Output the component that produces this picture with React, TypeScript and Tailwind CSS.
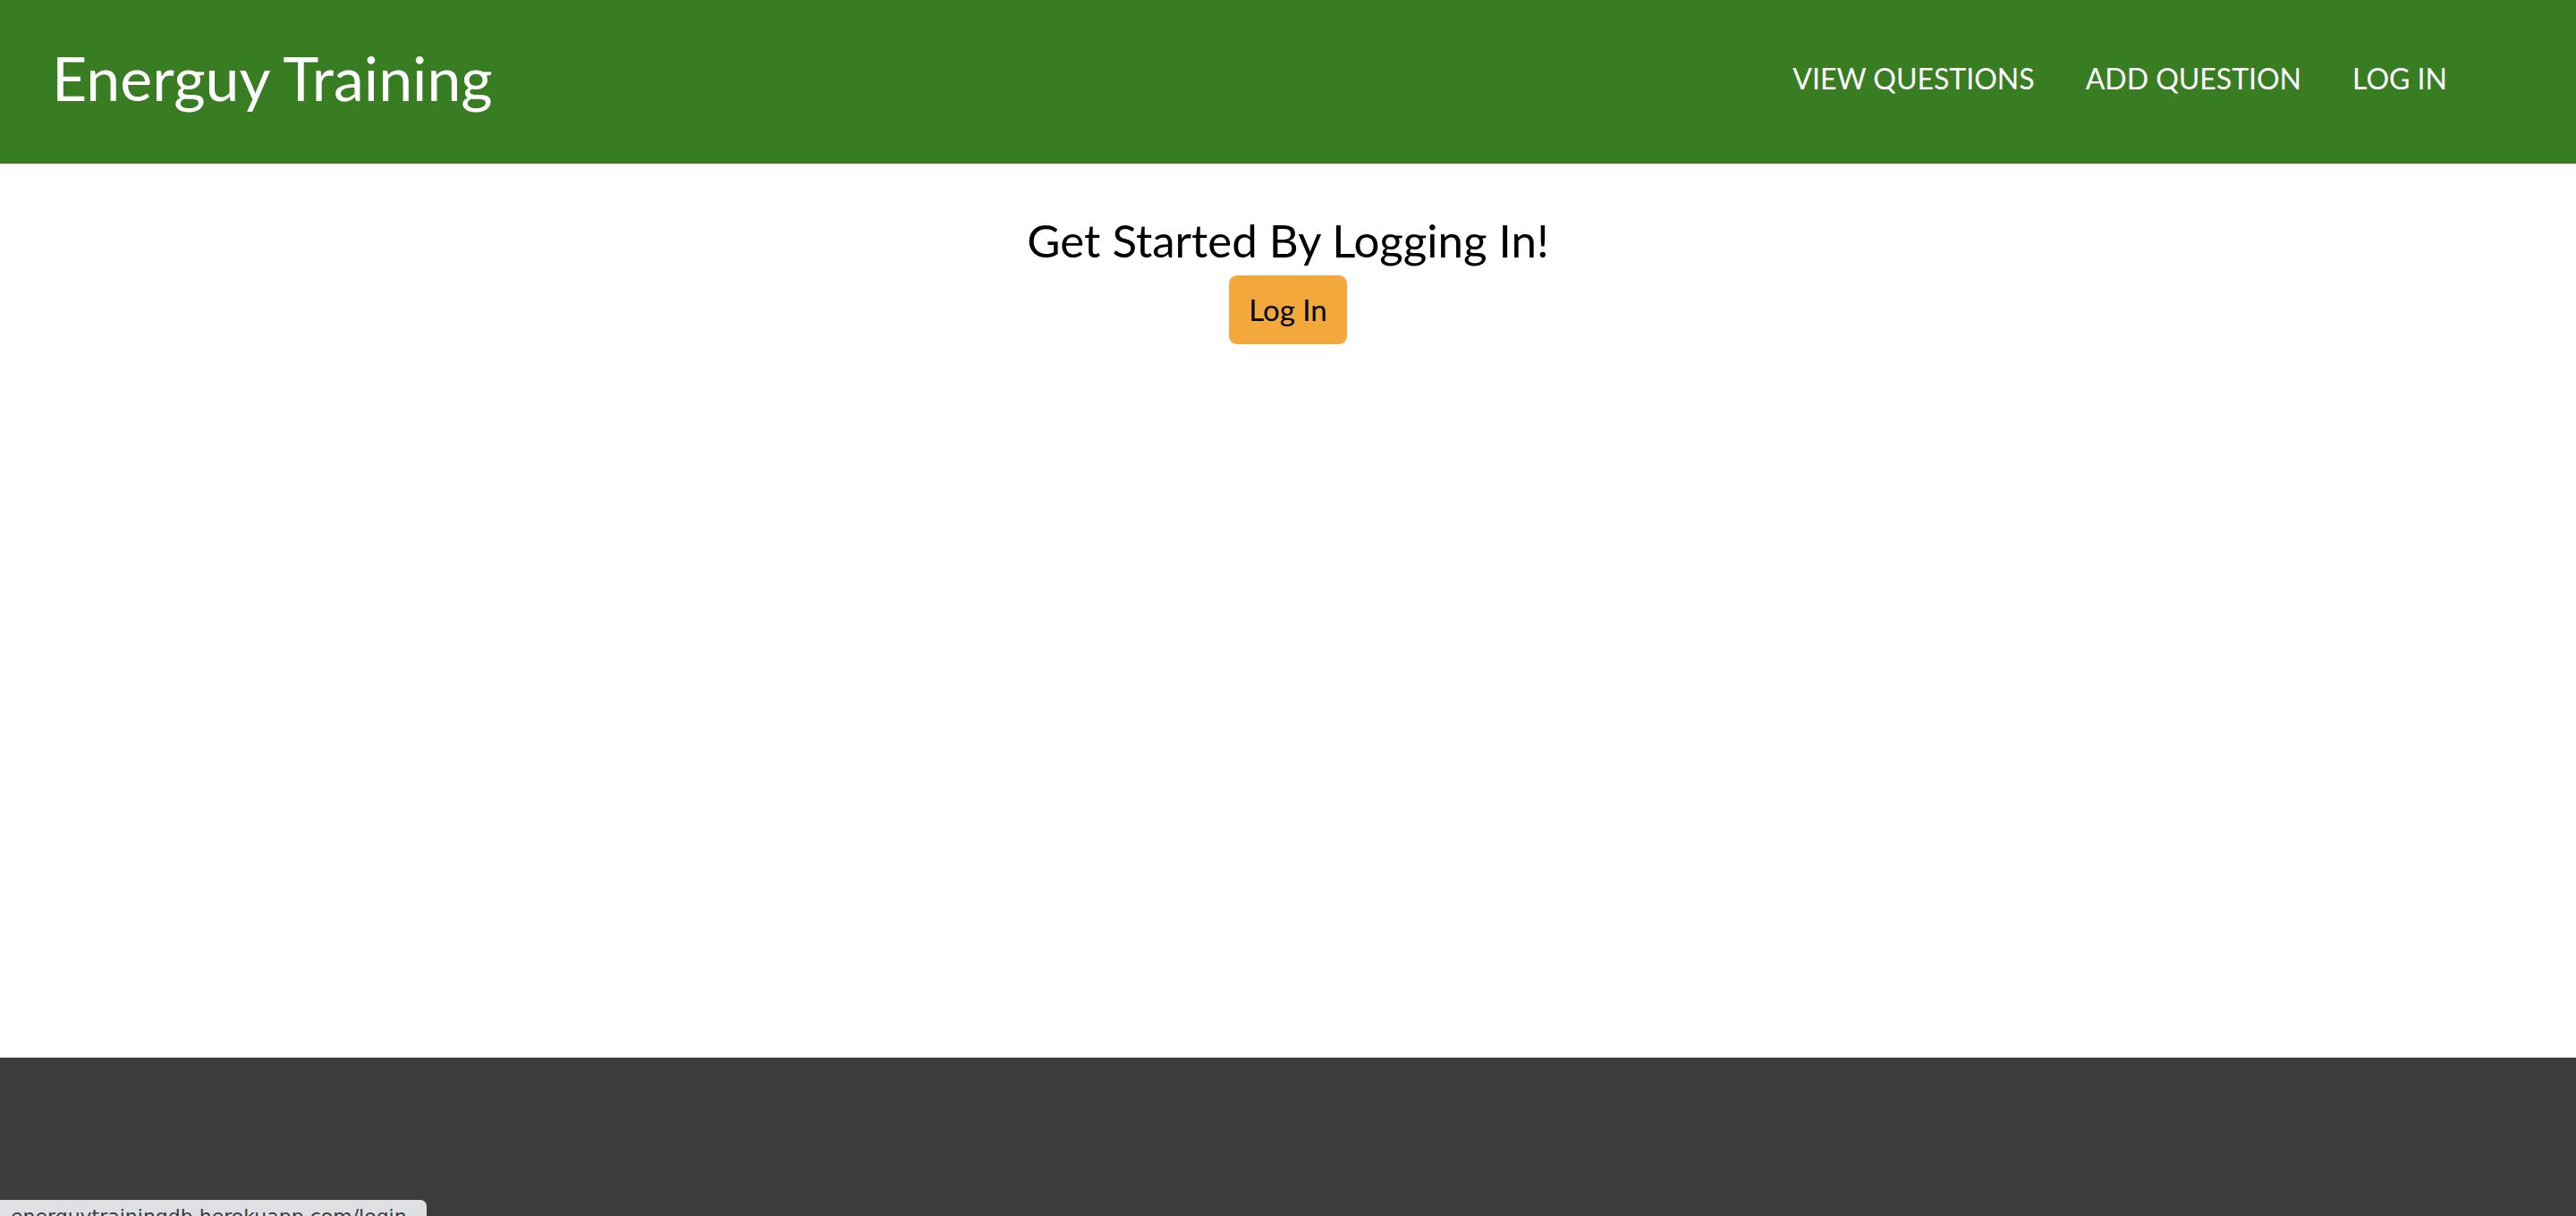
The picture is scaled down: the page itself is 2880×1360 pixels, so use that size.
import React from 'react';

const NavItem = ({ children }: { children: React.ReactNode }) => (
  <a href="#" className="text-[32px] uppercase text-white leading-none">
    {children}
  </a>
);

export default function App() {
  return (
    <div className="relative flex min-h-screen flex-col bg-white font-['Lato',sans-serif]">
      <header className="flex h-[183px] items-center justify-between bg-[#387d22] pl-[58px] pr-[144px]">
        <a href="#" className="pb-[10px] text-[68px] leading-none text-white">
          Energuy Training
        </a>
        <nav className="flex items-center gap-[57px] pb-[8px]">
          <NavItem>View Questions</NavItem>
          <NavItem>Add Question</NavItem>
          <NavItem>Log In</NavItem>
        </nav>
      </header>

      <main className="flex flex-1 flex-col items-center pt-[60px]">
        <h2 className="text-[51px] leading-none text-black">Get Started By Logging In!</h2>
        <button className="mt-[14px] h-[77px] rounded-[9px] bg-[#f3a83c] px-[22px] text-[33px] text-black">
          Log In
        </button>
      </main>

      <footer className="h-[178px] border-t border-[#e4e4e4] bg-[#3c3c3c]" />

      <div className="absolute bottom-0 left-0 h-[18px] w-[477px] overflow-hidden rounded-tr-[7px] bg-[#dfe0e4] pl-[12px] pt-[8px]">
        <span className="block font-['DejaVu_Sans',sans-serif] text-[22px] leading-none text-[#3b3b3b]">
          energuytrainingdb.herokuapp.com/login
        </span>
      </div>
    </div>
  );
}
